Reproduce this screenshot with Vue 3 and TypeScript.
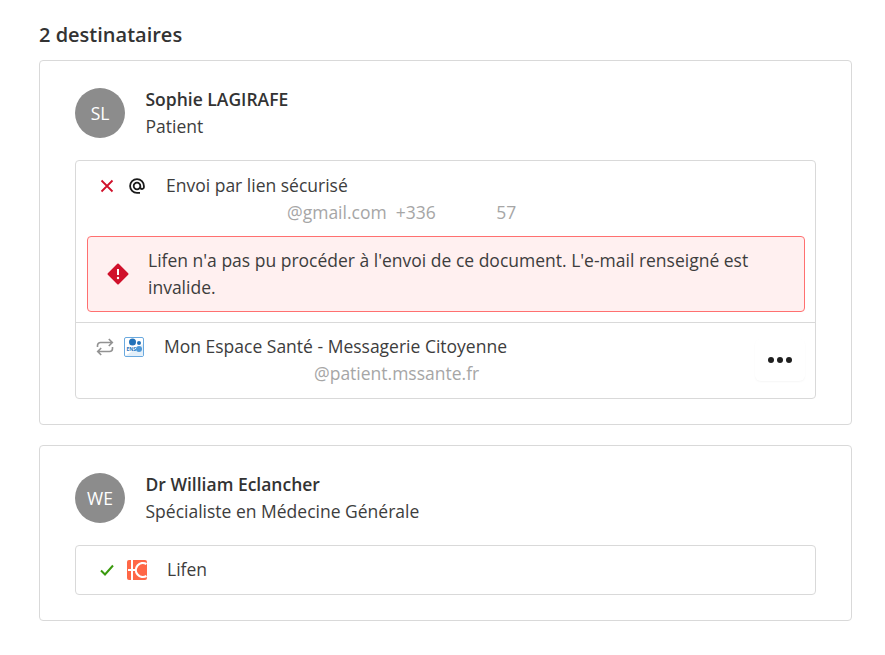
<script setup lang="ts">
</script>

<template>
  <main class="page">
    <h2 class="title">2 destinataires</h2>

    <section class="card first">
      <header class="person">
        <div class="avatar">SL</div>
        <div class="who">
          <div class="name">Sophie LAGIRAFE</div>
          <div class="role">Patient</div>
        </div>
      </header>
      <div class="box">
        <div class="channel top">
          <svg class="state" width="16" height="16" viewBox="0 0 16 16"><path d="M2.500 2.500l11 11M13.500 2.500l-11 11" stroke="#d0112b" stroke-width="1.800" fill="none"/></svg>
          <svg class="kind" width="18" height="18" viewBox="0 0 18 18"><path d="M12.300 9a3.300 3.300 0 1 1-3.300-3.300A3.300 3.300 0 0 1 12.300 9v1.200a1.800 1.800 0 0 0 3.600 0V9A6.900 6.900 0 1 0 9 15.900h3" stroke="#1a1a1a" stroke-width="1.800" fill="none"/></svg>
          <div class="label-a">Envoi par lien sécurisé</div>
        </div>
        <div class="detail d1">@gmail.com&nbsp; +336 <span class="gap"></span>57</div>
        <div class="alert">
          <svg class="alert-ic" width="22" height="22" viewBox="0 0 22 22"><path d="M11 1.500 L20.500 11 L11 20.500 L1.500 11 Z" fill="#d0112b" stroke="#d0112b" stroke-width="2" stroke-linejoin="round"/><path d="M11 6v6" stroke="#fff" stroke-width="2"/><circle cx="11" cy="15" r="1.200" fill="#fff"/></svg>
          <p>Lifen n'a pas pu procéder à l'envoi de ce document. L'e-mail renseigné est invalide.</p>
        </div>
        <div class="second">
          <div class="channel">
            <svg class="state repeat" width="18" height="18" viewBox="0 0 18 18"><path d="M1.500 9V7.500a3 3 0 0 1 3-3H16M12.800 1 16.300 4.500 12.800 8M16.500 9v1.500a3 3 0 0 1-3 3H2M5.200 10 1.700 13.500 5.200 17" stroke="#929292" stroke-width="1.600" fill="none"/></svg>
            <svg class="kind mss" width="20" height="20" viewBox="0 0 20 20"><rect x=".5" y=".5" width="19" height="19" rx="1.500" fill="#fff" stroke="#6aa9df"/><path d="M1 19 19 7v12z" fill="#e3eff9"/><circle cx="8.500" cy="5" r="3.500" fill="#2272b9"/><circle cx="15" cy="6" r="2" fill="#2272b9"/><circle cx="15" cy="12" r="3" fill="#4e97d6"/><text x="2.500" y="14" class="mss-t">ENS</text></svg>
            <div class="label-b">Mon Espace Santé - Messagerie Citoyenne</div>
          </div>
          <div class="detail d2">@patient.mssante.fr</div>
          <button class="more" type="button" aria-label="Plus"><i></i><i></i><i></i></button>
        </div>
      </div>
    </section>

    <section class="card">
      <header class="person">
        <div class="avatar">WE</div>
        <div class="who">
          <div class="name">Dr William Eclancher</div>
          <div class="role">Spécialiste en Médecine Générale</div>
        </div>
      </header>
      <div class="box">
        <div class="channel single">
          <svg class="state" width="16" height="16" viewBox="0 0 16 16"><path d="M2 8.500l4 4 8-9" stroke="#3a9a0e" stroke-width="2" fill="none"/></svg>
          <svg class="kind lifen" width="20" height="20" viewBox="0 0 20 20"><rect width="20" height="20" rx="2" fill="#ff6746"/><path d="M5 0v20M1 10h7" stroke="#fff" stroke-width="2" fill="none"/><path d="M19.500 4A7 7 0 1 0 19.500 16" stroke="#fff" stroke-width="2.200" fill="none"/></svg>
          <div class="label-a">Lifen</div>
        </div>
      </div>
    </section>
  </main>
</template>

<style scoped>
.page {
  box-sizing: border-box;
  width: 885px;
  height: 655px;
  padding: 20px 33px 0 39px;
  font-family: "Open Sans", sans-serif;
  color: #3d3d3d;
  font-size: 17.5px;
  background: #fff;
  overflow: hidden;
}
.title {
  margin: 1px 0 11px;
  font-size: 20px;
  line-height: 28px;
  font-weight: 600;
  color: #333;
}
.card {
  box-sizing: border-box;
  border: 1px solid #d9d9d9;
  border-radius: 4px;
  padding: 27px 35px 25px;
}
.first {
  margin-bottom: 20px;
}
.person {
  display: flex;
  gap: 20px;
  margin-bottom: 20px;
}
.avatar {
  width: 50px;
  height: 50px;
  border-radius: 50%;
  background: #8c8c8c;
  color: #fff;
  font-size: 17.5px;
  font-weight: 500;
  display: flex;
  align-items: center;
  justify-content: center;
}
.who {
  line-height: 27px;
  margin-top: -2px;
  padding-left: 0.5px;
}
.name {
  font-weight: 600;
  color: #333;
}
.box {
  border: 1px solid #d9d9d9;
  border-radius: 4px;
}
.channel {
  display: flex;
  align-items: center;
  height: 27px;
}
.top {
  margin-top: 11px;
}
.state {
  margin-left: 23px;
  flex: none;
}
.kind {
  margin-left: 13px;
  flex: none;
}
.label-a {
  margin: -2px 0 0 20px;
}
.label-b {
  margin: -2px 0 0 20px;
}
.lifen {
  margin-left: 12px;
}
.mss-t {
  font-family: "Open Sans", sans-serif;
  font-size: 5px;
  font-weight: 700;
  fill: #2272b9;
}
.detail {
  line-height: 27px;
  color: #a6a6a6;
}
.d1 {
  padding-left: 211px;
}
.gap {
  display: inline-block;
  width: 56px;
}
.d2 {
  padding-left: 238px;
}
.alert {
  box-sizing: border-box;
  margin: 10px 10px 10px 11px;
  height: 76px;
  border: 1px solid #ff7070;
  border-radius: 4px;
  background: #fff0f0;
  display: flex;
  align-items: center;
  gap: 19px;
  padding: 0 20px 0 19px;
}
.alert p {
  margin: 0;
  line-height: 27px;
}
.alert-ic {
  flex: none;
}
.second {
  position: relative;
  border-top: 1px solid #d9d9d9;
  padding: 10px 0 11px;
}
.second .state {
  margin-left: 20px;
}
.second .kind {
  margin-left: 10px;
}
.more {
  position: absolute;
  right: 10px;
  bottom: 17px;
  width: 50px;
  height: 42px;
  padding: 0;
  border: 0;
  border-radius: 6px;
  background: #fff;
  box-shadow: 0 1px 2px rgba(0, 0, 0, 0.04);
  display: flex;
  align-items: center;
  justify-content: center;
  gap: 3px;
}
.more i {
  width: 6px;
  height: 6px;
  border-radius: 50%;
  background: #1f1f1f;
}
.single {
  height: 48px;
}
</style>
